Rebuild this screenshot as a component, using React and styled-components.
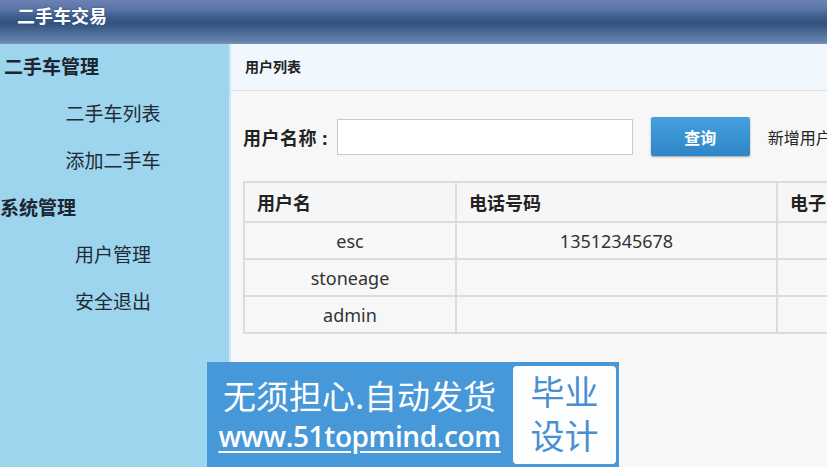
import styled, { createGlobalStyle } from "styled-components"

const GlobalStyle = createGlobalStyle`
    body {
        margin: 0;
        font-family: "Noto Sans", "Noto Sans CJK SC", sans-serif;
        color: #222;
        overflow: hidden;
    }
`

const menu = [
    { title: "二手车管理", indent: 4, items: ["二手车列表", "添加二手车"] },
    { title: "系统管理", indent: 0, items: ["用户管理", "安全退出"] },
]

const users = [
    { name: "esc", phone: "13512345678" },
    { name: "stoneage", phone: "" },
    { name: "admin", phone: "" },
]

export default function App() {
    return (
        <>
            <GlobalStyle />
            <Page>
                <Header>
                    <h1>二手车交易</h1>
                </Header>
                <Body>
                    <Sidebar>
                        {menu.map((group) => (
                            <div key={group.title}>
                                <GroupTitle indent={group.indent}>{group.title}</GroupTitle>
                                {group.items.map((item) => (
                                    <MenuItem key={item}>{item}</MenuItem>
                                ))}
                            </div>
                        ))}
                    </Sidebar>
                    <Main>
                        <Crumb>用户列表</Crumb>
                        <Content>
                            <Search>
                                <label>用户名称 :</label>
                                <input />
                                <Button>查询</Button>
                                <AddLink>新增用户</AddLink>
                            </Search>
                            <Table>
                                <colgroup>
                                    <col style={{ width: 212 }} />
                                    <col style={{ width: 321 }} />
                                    <col />
                                </colgroup>
                                <thead>
                                    <tr>
                                        <th>用户名</th>
                                        <th>电话号码</th>
                                        <th>电子邮箱</th>
                                    </tr>
                                </thead>
                                <tbody>
                                    {users.map((u) => (
                                        <tr key={u.name}>
                                            <td>{u.name}</td>
                                            <td>{u.phone}</td>
                                            <td></td>
                                        </tr>
                                    ))}
                                </tbody>
                            </Table>
                        </Content>
                    </Main>
                </Body>
                <Banner>
                    <BannerText>
                        <Slogan>无须担心.自动发货</Slogan>
                        <Site>www.51topmind.com</Site>
                    </BannerText>
                    <Badge>
                        <span>毕业</span>
                        <span>设计</span>
                    </Badge>
                </Banner>
            </Page>
        </>
    )
}

const Page = styled.div`
    position: relative;
    width: 827px;
    height: 467px;
    overflow: hidden;
    display: flex;
    flex-direction: column;
`

const Header = styled.div`
    height: 43px;
    flex-shrink: 0;
    border-bottom: 1px solid #7d8fae;
    background: linear-gradient(
        to bottom,
        #6b82b3 0%,
        #5a74a6 22%,
        #3d5f8f 38%,
        #32537c 55%,
        #4a6a96 75%,
        #6e86b2 100%
    );

    h1 {
        margin: 0;
        padding-left: 17px;
        line-height: 32px;
        font-size: 18px;
        font-weight: bold;
        color: #fff;
        text-shadow: 0 0 2px #2c4670;
    }
`

const Body = styled.div`
    flex: 1;
    display: flex;
`

const Sidebar = styled.div`
    width: 229px;
    flex-shrink: 0;
    background: #9dd4ee;
    border-right: 2px solid #c9e7f6;
`

const GroupTitle = styled.div`
    height: 47px;
    line-height: 47px;
    padding-left: ${(props) => props.indent}px;
    font-size: 19px;
    font-weight: bold;
    color: #1c2530;
`

const MenuItem = styled.div`
    height: 47px;
    line-height: 47px;
    width: 226px;
    text-align: center;
    font-size: 19px;
    color: #1f2a33;
`

const Main = styled.div`
    flex: 1;
    background: #f7f7f7;
    display: flex;
    flex-direction: column;
    min-width: 0;
`

const Crumb = styled.div`
    height: 46px;
    line-height: 46px;
    padding-left: 14px;
    font-size: 14px;
    font-weight: bold;
    color: #222;
    background: #f0f7fd;
    border-bottom: 1px solid #dde5ec;
`

const Content = styled.div`
    padding: 26px 0 0 12px;
`

const Search = styled.div`
    display: flex;
    align-items: center;
    white-space: nowrap;

    label {
        flex-shrink: 0;
        font-size: 18px;
        font-weight: bold;
        color: #222;
        letter-spacing: 0.5px;
    }

    input {
        flex-shrink: 0;
        width: 294px;
        height: 34px;
        margin-left: 9px;
        border: 1px solid #c9c9c9;
        background: #fff;
        padding: 0;
    }
`

const Button = styled.button`
    flex-shrink: 0;
    width: 99px;
    height: 39px;
    margin-left: 18px;
    border: none;
    border-radius: 2px;
    background: linear-gradient(to bottom, #45a0dc, #2f86c8);
    box-shadow: 0 1px 2px rgba(0, 0, 0, 0.35);
    color: #fff;
    font-family: "Noto Sans CJK SC", sans-serif;
    font-size: 16px;
    font-weight: bold;
`

const AddLink = styled.span`
    flex-shrink: 0;
    margin-left: 18px;
    font-size: 16px;
    color: #222;
`

const Table = styled.table`
    margin-top: 25px;
    border-collapse: collapse;
    width: 640px;
    table-layout: fixed;
    font-size: 18px;

    th,
    td {
        border: 2px solid #dcdcdc;
        padding: 0;
    }

    th {
        height: 38px;
        text-align: left;
        padding-left: 12px;
        font-weight: bold;
        background: #f6f6f6;
        white-space: nowrap;
        overflow: hidden;
    }

    td {
        height: 35px;
        text-align: center;
        color: #333;
    }
`

const Banner = styled.div`
    position: absolute;
    left: 207px;
    top: 362px;
    width: 412px;
    height: 105px;
    background: #4698d9;
    display: flex;
    align-items: center;
`

const BannerText = styled.div`
    width: 305px;
    display: flex;
    flex-direction: column;
    align-items: center;
    color: #fff;
`

const Slogan = styled.div`
    font-family: "Noto Sans CJK SC", sans-serif;
    font-size: 33px;
    line-height: 42px;
    white-space: nowrap;
`

const Site = styled.div`
    font-family: "Open Sans", sans-serif;
    font-size: 28px;
    font-weight: 600;
    line-height: 40px;
    letter-spacing: -0.4px;
    white-space: nowrap;
    text-decoration: underline;
    text-underline-offset: 4px;
`

const Badge = styled.div`
    width: 103px;
    height: 98px;
    margin-left: 1px;
    background: #fdfeff;
    border-radius: 4px;
    display: flex;
    flex-direction: column;
    align-items: center;
    justify-content: center;
    padding-bottom: 4px;
    box-sizing: border-box;
    color: #4a8fcf;
    font-family: "Noto Sans CJK SC", sans-serif;
    font-size: 34px;
    line-height: 44px;
`
